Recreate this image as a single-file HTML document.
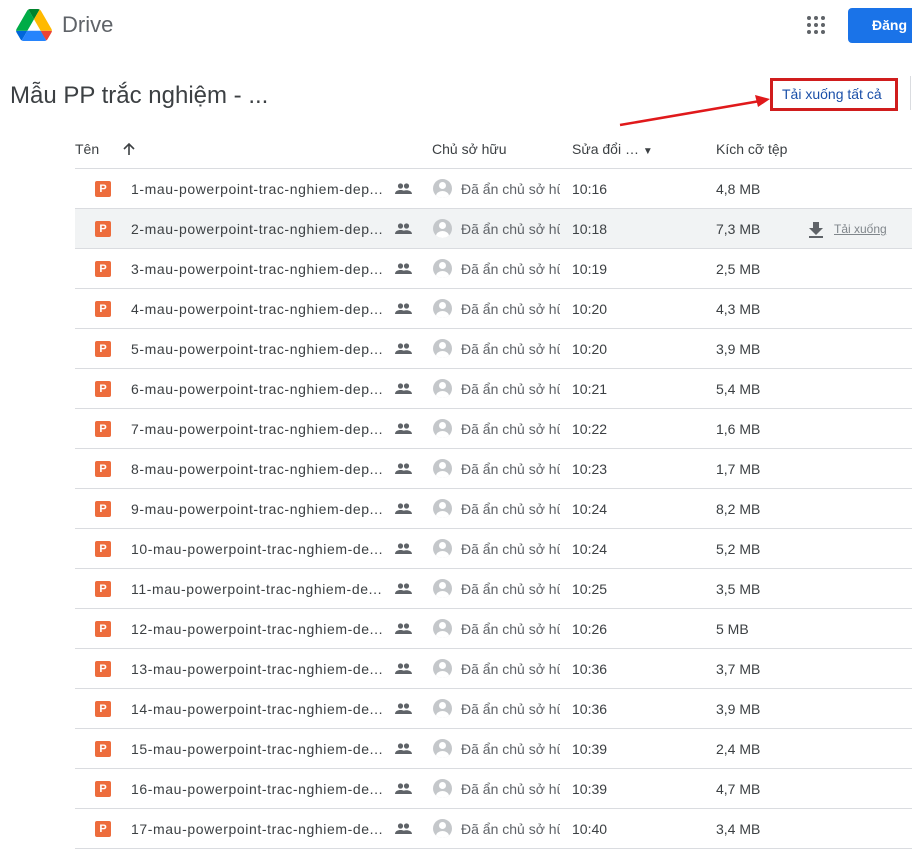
<!DOCTYPE html>
<html><head><meta charset="utf-8"><style>
*{margin:0;padding:0;box-sizing:border-box}
body{width:912px;height:851px;overflow:hidden;background:#fff;font-family:"Liberation Sans",Arial,sans-serif;color:#3c4043;position:relative}
.a{position:absolute;white-space:nowrap}
.row{position:absolute;left:75px;width:837px;height:40px;border-top:1px solid #dadce0;font-size:14px;color:#3c4043}
.row.h{background:#f1f3f4}
.row span{position:absolute;top:12px;white-space:nowrap}
.pi{position:absolute;left:20px;top:12px;width:16px;height:16px;background:#ed6c3c;border-radius:2px;color:#fff;font-size:11px;font-weight:bold;text-align:center;line-height:16px}
.ppl{position:absolute;left:320px;top:14px}
.av{position:absolute;left:358px;top:10px;width:19px;height:19px;border-radius:50%;background:#c4c7ca;overflow:hidden}
.av:before{content:"";position:absolute;left:6px;top:3px;width:7px;height:7px;border-radius:50%;background:#fff}
.av:after{content:"";position:absolute;left:3px;top:12px;width:13px;height:10px;border-radius:50%;background:#fff}
</style></head><body>
<svg class="a" style="left:16px;top:9px" width="36" height="32" viewBox="0 0 87.3 78">
<path d="m6.6 66.85 3.850 6.65c.8 1.4 1.95 2.5 3.3 3.3l13.75-23.8h-27.5c0 1.55.4 3.1 1.2 4.5z" fill="#0066da"/>
<path d="m43.65 25-13.75-23.8c-1.35.8-2.5 1.9-3.3 3.3l-25.4 44a9.06 9.06 0 0 0 -1.2 4.5h27.5z" fill="#00ac47"/>
<path d="m73.55 76.8c1.35-.8 2.5-1.9 3.3-3.3l1.6-2.75 7.65-13.25c.8-1.4 1.2-2.950 1.2-4.5h-27.502l5.852 11.5z" fill="#ea4335"/>
<path d="m43.65 25 13.75-23.8c-1.35-.8-2.9-1.2-4.5-1.2h-18.5c-1.6 0-3.15.45-4.5 1.2z" fill="#00832d"/>
<path d="m59.8 53h-32.3l-13.75 23.8c1.35.8 2.9 1.2 4.5 1.2h50.8c1.6 0 3.15-.45 4.5-1.2z" fill="#2684fc"/>
<path d="m73.4 26.5-12.7-22c-.8-1.4-1.95-2.5-3.3-3.3l-13.75 23.8 16.15 28h27.45c0-1.55-.4-3.1-1.2-4.5z" fill="#ffba00"/>
</svg>
<div class="a" style="left:62px;top:12px;font-size:22px;color:#5f6368">Drive</div>
<svg class="a" style="left:807px;top:16px" width="18" height="18" viewBox="0 0 18 18" fill="#5f6368">
<circle cx="2" cy="2" r="2"/><circle cx="9" cy="2" r="2"/><circle cx="16" cy="2" r="2"/>
<circle cx="2" cy="9" r="2"/><circle cx="9" cy="9" r="2"/><circle cx="16" cy="9" r="2"/>
<circle cx="2" cy="16" r="2"/><circle cx="9" cy="16" r="2"/><circle cx="16" cy="16" r="2"/></svg>
<div class="a" style="left:848px;top:8px;width:70px;height:35px;background:#1a73e8;border-radius:4px;color:#fff;font-weight:bold;font-size:14px;padding:9px 0 0 24px">Đăng</div>
<div class="a" style="left:10px;top:82px;font-size:24px;color:#3c4043">Mẫu PP trắc nghiệm - ...</div>
<div class="a" style="left:910px;top:76px;width:1px;height:34px;background:#dadce0"></div>
<div class="a" style="left:770px;top:78px;width:128px;height:33px;border:3px solid #d01d1d;color:#1a4fa8;font-size:14px;padding:5px 0 0 9px">Tải xuống tất cả</div>
<svg class="a" style="left:615px;top:92px" width="160" height="40"><line x1="5" y1="33" x2="145" y2="9" stroke="#e0191b" stroke-width="2.5"/><polygon points="155,7 140,3 143,15" fill="#e0191b"/></svg>
<div class="a" style="left:75px;top:141px;font-size:14px">Tên</div>
<svg class="a" style="left:121px;top:141px" width="16" height="16" viewBox="0 0 16 16"><path d="M8 14V3M3 8l5-5 5 5" stroke="#3c4043" stroke-width="1.6" fill="none"/></svg>
<div class="a" style="left:432px;top:141px;font-size:14px">Chủ sở hữu</div>
<div class="a" style="left:572px;top:141px;font-size:14px">Sửa đổi … <span style="font-size:10px">▼</span></div>
<div class="a" style="left:716px;top:141px;font-size:14px">Kích cỡ tệp</div>
<div id="rows"></div>
<div class="a" style="left:75px;top:848px;width:837px;border-top:1px solid #dadce0"></div>
<script>
var d=[["1","dep","10:16","4,8 MB"],["2","dep","10:18","7,3 MB"],["3","dep","10:19","2,5 MB"],["4","dep","10:20","4,3 MB"],["5","dep","10:20","3,9 MB"],["6","dep","10:21","5,4 MB"],["7","dep","10:22","1,6 MB"],["8","dep","10:23","1,7 MB"],["9","dep","10:24","8,2 MB"],["10","de","10:24","5,2 MB"],["11","de","10:25","3,5 MB"],["12","de","10:26","5 MB"],["13","de","10:36","3,7 MB"],["14","de","10:36","3,9 MB"],["15","de","10:39","2,4 MB"],["16","de","10:39","4,7 MB"],["17","de","10:40","3,4 MB"]];
var h="";
d.forEach(function(r,i){
h+='<div class="row'+(i==1?' h':'')+'" style="top:'+(168+i*40)+'px"><div class="pi">P</div><span style="left:56px;letter-spacing:0.6px">'+r[0]+'-mau-powerpoint-trac-nghiem-'+r[1]+'...</span>'+
'<svg class="ppl" width="17" height="12" viewBox="0 0 17 12" fill="#5f6368"><circle cx="5.5" cy="3" r="2.6"/><circle cx="11.5" cy="3" r="2.6"/><path d="M0 11c0-3 3-4 5.5-4s5.5 1 5.5 4zM10 11c0-1.5-.5-2.5-1.3-3.3 1-.4 2-.5 2.8-.5 2.5 0 5.5 1 5.5 3.8z"/></svg>'+
'<div class="av"></div><span style="left:386px;width:99px;overflow:hidden;color:#5f6368">Đã ẩn chủ sở hữu</span><span style="left:497px">'+r[2]+'</span><span style="left:641px">'+r[3]+'</span>'+
(i==1?'<svg style="position:absolute;left:733px;top:12px" width="16" height="17" viewBox="0 0 16 17" fill="#5f6368"><path d="M5 1h6v6h4l-7 7-7-7h4z"/><rect x="1" y="15" width="14" height="2"/></svg><span style="left:759px;font-size:12px;color:#80868b;text-decoration:underline;top:13px">Tải xuống</span>':'')+
'</div>';});
document.getElementById("rows").innerHTML=h;
</script>
</body></html>
